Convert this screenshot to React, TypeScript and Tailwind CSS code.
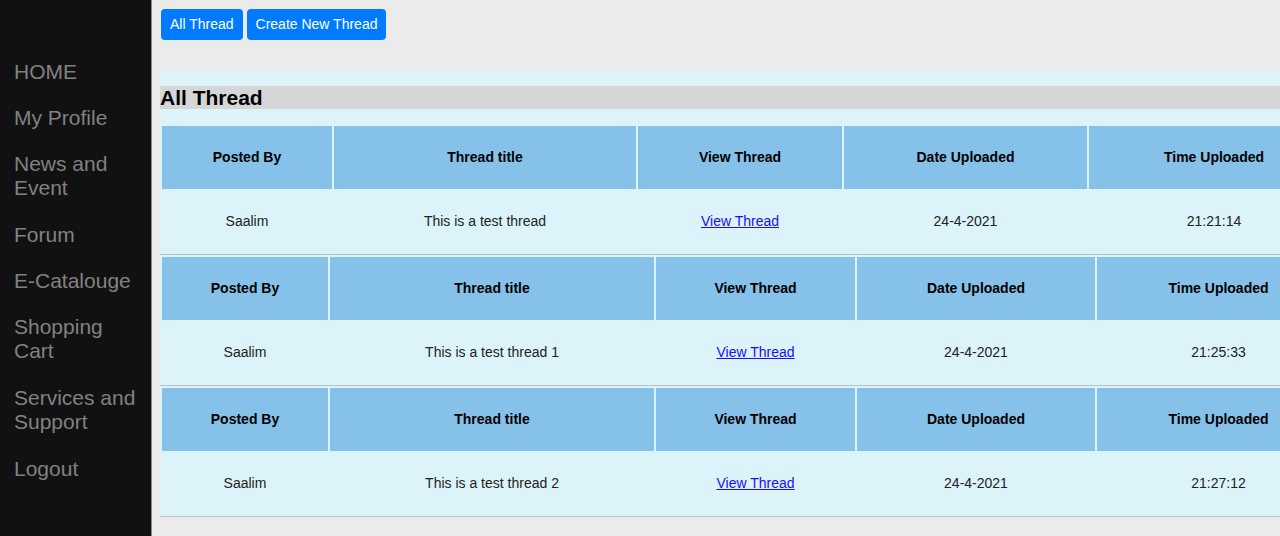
const navItems = [
  { label: "HOME", wrap: false },
  { label: "My Profile", wrap: false },
  { label: "News and Event", wrap: true },
  { label: "Forum", wrap: false },
  { label: "E-Catalouge", wrap: false },
  { label: "Shopping Cart", wrap: true },
  { label: "Services and Support", wrap: true },
  { label: "Logout", wrap: false },
];

type Thread = {
  by: string;
  title: string;
  date: string;
  time: string;
  widths: number[];
};

const threads: Thread[] = [
  { by: "Saalim", title: "This is a test thread", date: "24-4-2021", time: "21:21:14", widths: [170, 302, 204, 243, 250] },
  { by: "Saalim", title: "This is a test thread 1", date: "24-4-2021", time: "21:25:33", widths: [166, 324, 199, 238, 243] },
  { by: "Saalim", title: "This is a test thread 2", date: "24-4-2021", time: "21:27:12", widths: [166, 324, 199, 238, 243] },
];

const headers = ["Posted By", "Thread title", "View Thread", "Date Uploaded", "Time Uploaded"];

function ThreadTable({ t }: { t: Thread }) {
  // table width = columns + border-spacing on both sides of each cell
  const total = t.widths.reduce((a, b) => a + b, 0) + (t.widths.length + 1) * 2;
  return (
    <table
      className="table-fixed border-separate border-spacing-[2px] border-b border-[#b9c3c7] shrink-0"
      style={{ width: total }}
    >
      <colgroup>
        {t.widths.map((w, i) => (
          <col key={i} style={{ width: w }} />
        ))}
      </colgroup>
      <thead>
        <tr>
          {headers.map((h) => (
            <th key={h} className="h-[63px] bg-[#85c1e9] text-[14px] font-bold text-black text-center p-0">
              {h}
            </th>
          ))}
        </tr>
      </thead>
      <tbody>
        <tr className="text-[14px] text-[#222] text-center">
          <td className="h-[61px] p-0">{t.by}</td>
          <td className="p-0">{t.title}</td>
          <td className="p-0">
            <a href="#" className="text-[#1a0dff] underline">
              View Thread
            </a>
          </td>
          <td className="p-0">{t.date}</td>
          <td className="p-0">{t.time}</td>
        </tr>
      </tbody>
    </table>
  );
}

export default function App() {
  return (
    <div
      className="w-[1280px] h-[536px] overflow-hidden flex bg-[#ebebeb]"
      style={{ fontFamily: '"Liberation Sans", Arial, sans-serif' }}
    >
      {/* Side navigation */}
      <nav className="w-[152px] shrink-0 bg-[#111] border-r border-[#8a8a8a] pt-[49px]">
        {navItems.map((item) => (
          <a
            key={item.label}
            href="#"
            className={
              item.wrap
                ? "block pl-[14px] pr-[8px] pt-[11px] pb-[12px] text-[21px] leading-[24px] text-[#818181]"
                : "block pl-[14px] pr-[8px] py-[11px] text-[21px] leading-[24px] text-[#818181]"
            }
          >
            {item.label}
          </a>
        ))}
      </nav>

      <main className="flex-1 min-w-0 pl-[8px]">
        <div className="flex gap-[4px] pt-[9px] pl-[1px]">
          <button className="h-[31px] px-[9px] rounded-[4px] bg-[#007bff] text-white text-[14px]">All Thread</button>
          <button className="h-[31px] px-[9px] rounded-[4px] bg-[#007bff] text-white text-[14px]">
            Create New Thread
          </button>
        </div>

        <section className="mt-[31px] w-[1200px] bg-[#dcf3fa] pt-[15px]">
          <h2 className="h-[23px] bg-[#d6d6d6] text-[21px] leading-[23px] font-bold text-black">All Thread</h2>
          <div className="mt-[15px] flex flex-col items-start w-[1200px]">
            {threads.map((t, i) => (
              <ThreadTable key={i} t={t} />
            ))}
          </div>
        </section>
      </main>
    </div>
  );
}
